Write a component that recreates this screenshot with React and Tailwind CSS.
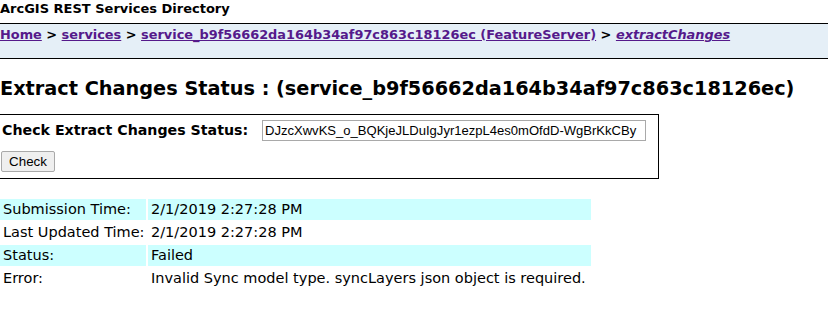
export default function App() {
  const rows = [
    { label: 'Submission Time:', value: '2/1/2019 2:27:28 PM', shade: true },
    { label: 'Last Updated Time:', value: '2/1/2019 2:27:28 PM', shade: false },
    { label: 'Status:', value: 'Failed', shade: true },
    { label: 'Error:', value: 'Invalid Sync model type. syncLayers json object is required.', shade: false },
  ]

  return (
    <div className="min-h-screen bg-white text-black text-[13px] font-['DejaVu_Sans',Verdana,sans-serif]">
      {/* Header */}
      <div className="font-bold leading-[18px]">ArcGIS REST Services Directory</div>

      {/* Breadcrumb */}
      <div className="mt-[5px] h-[36px] border-y border-black bg-[#e5eff7] font-bold text-[12.9px] leading-[18px] pt-[2px] whitespace-nowrap">
        <a href="#" className="text-[#551a8b] underline">Home</a>
        {' > '}
        <a href="#" className="text-[#551a8b] underline">services</a>
        {' > '}
        <a href="#" className="text-[#551a8b] underline">service_b9f56662da164b34af97c863c18126ec (FeatureServer)</a>
        {' > '}
        <a href="#" className="text-[#551a8b] underline italic">extractChanges</a>
      </div>

      <h2 className="mt-[18px] text-[19.3px] font-bold leading-[24px] whitespace-nowrap">
        Extract Changes Status : (service_b9f56662da164b34af97c863c18126ec)
      </h2>

      {/* Check form */}
      <div className="mt-[13px] w-[659px] border-y border-r border-black pl-[2px] pt-[5px] pb-[6px]">
        <div className="flex items-center">
          <span className="font-bold text-[14.2px] w-[260px] whitespace-nowrap">Check Extract Changes Status:</span>
          <input
            readOnly
            value="DJzcXwvKS_o_BQKjeJLDuIgJyr1ezpL4es0mOfdD-WgBrKkCBy"
            className="w-[384px] h-[21px] border border-[#a9a9a9] px-[2px] font-['Liberation_Sans',Arial,sans-serif] text-[13.05px] outline-none"
          />
        </div>
        <button className="mt-[10px] -ml-px h-[21px] w-[54px] rounded-[2px] border border-[#a9a9a9] bg-[#efefef] font-['Liberation_Sans',Arial,sans-serif] text-[13.35px]">
          Check
        </button>
      </div>

      {/* Status table */}
      <div className="mt-[20px] grid grid-cols-[146px_443px] gap-[2px] text-[14.5px]">
        {rows.map((row, i) => (
          <div key={i} className="contents">
            <div className={`h-[21px] pl-[3px] leading-[21px] whitespace-nowrap ${row.shade ? 'bg-[#ccffff]' : ''}`}>{row.label}</div>
            <div className={`h-[21px] pl-[3px] leading-[21px] whitespace-nowrap ${row.shade ? 'bg-[#ccffff]' : ''}`}>{row.value}</div>
          </div>
        ))}
      </div>
    </div>
  )
}
